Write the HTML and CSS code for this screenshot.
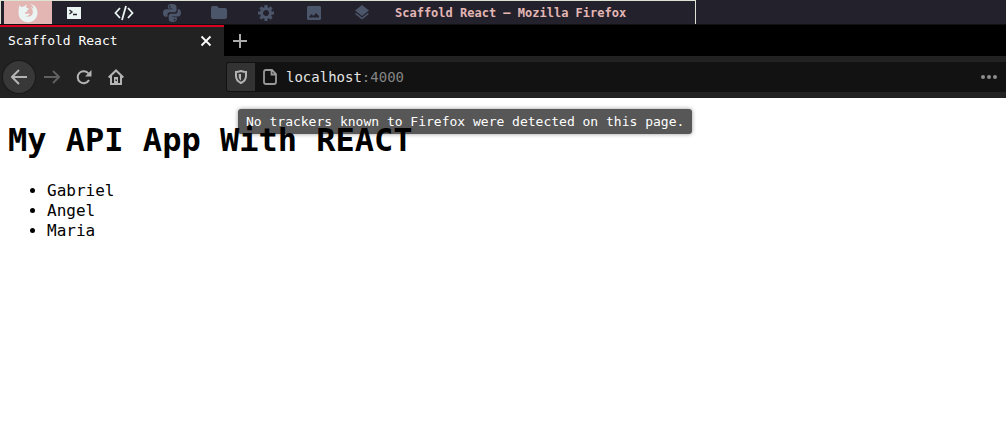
FILE: index.html
```html
<!DOCTYPE html>
<html lang="en">
<head>
<meta charset="utf-8">
<title>Scaffold React</title>
<link rel="stylesheet" href="styles.css">
</head>
<body>
<header class="panel">
  <div class="panel-group">
    <nav class="workspaces" aria-label="Workspaces">
      <button class="workspace current" aria-label="Browser"><svg width="20" height="20" viewBox="0 0 20 20"><path fill="currentColor" d="M1.200 2.200 3.300 4C4.300 3.300 5.500 3.300 6.300 3.500 7 2.300 8 1.700 9 1.500 8.200 2.700 8 3.800 8.600 5l2.400.4c-.2 1.200-1.200 1.500-2 2.200l.1 1.400-1.900-.1c-.8 1.100.5 2.300 1.900 1.900 1-.3 2-.6 2.500.1-.7 1.700-2.500 2.300-4 2 2.500 1.500 6.400.4 7.100-2.700.6-2.500-.4-4.300-2-5.900 1.400.4 2.200 1 2.900 1.800C15.500 3.500 14.300 2 12 .7c4 .6 7.300 3.900 7.500 8.500.2 5.900-4.200 10.100-9.600 10.100C4 19.300.5 14.700.5 9.800.5 7 1 5 1.200 2.200z"/></svg></button>
      <button class="workspace light" aria-label="Terminal"><svg width="14" height="12" viewBox="0 0 14 12"><path fill="currentColor" d="M0 0h14v12H0z"/><path d="m2.500 3 2.500 2-2.500 2M6 7.500h4" fill="none" stroke="#23212c" stroke-width="1.300"/></svg></button>
      <button class="workspace light" aria-label="Code"><svg width="20" height="16" viewBox="0 0 20 16" fill="none" stroke="currentColor" stroke-width="1.800"><path d="M6 3 1.500 8 6 13M14 3l4.500 5-4.500 5M12 1 8 15"/></svg></button>
      <button class="workspace" aria-label="Python"><svg width="18" height="18" viewBox="0 0 24 24" fill="currentColor"><path d="M12 0C7 0 6.500 2 6.500 3.500V6h6v1H4C1.500 7 0 9 0 12s1.500 5 3.500 5H6v-3c0-2 1.500-3 3-3h6c1.500 0 3-1 3-3V4c0-2.500-2-4-6-4zM9 2.200a1.200 1.200 0 1 1 0 2.400 1.200 1.200 0 0 1 0-2.400z"/><path d="M19.500 7v3c0 2-1.500 3-3 3h-6c-2 0-3 1.500-3 3v4c0 2.500 2 4 5 4 4 0 6-1.500 6-4v-2.500h-6v-1H20c2.500 0 4-2 4-5s-1.500-4.500-3-4.500zM15.500 19.500a1.200 1.200 0 1 1 0 2.400 1.200 1.200 0 0 1 0-2.400z"/></svg></button>
      <button class="workspace" aria-label="Files"><svg width="16" height="14" viewBox="0 0 16 14"><path fill="currentColor" d="M0 2q0-2 2-2h4l2 2h6q2 0 2 2v7q0 2-2 2H2q-2 0-2-2z"/></svg></button>
      <button class="workspace" aria-label="Settings"><svg width="16" height="16" viewBox="0 0 16 16" fill="none" stroke="currentColor"><circle cx="8" cy="8" r="4.500" stroke-width="3"/><path d="M8 0v3M8 13v3M0 8h3M13 8h3M2.400 2.400l2 2M11.600 11.600l2 2M2.400 13.600l2-2M11.600 4.400l2-2" stroke-width="3"/></svg></button>
      <button class="workspace" aria-label="Pictures"><svg width="14" height="14" viewBox="0 0 14 14"><path fill="currentColor" fill-rule="evenodd" d="M1 0h12l1 1v12l-1 1H1l-1-1V1zM2 11.500h10V10L9 7l-2.500 3-2-2L2 11z"/></svg></button>
      <button class="workspace" aria-label="Layers"><svg width="16" height="16" viewBox="0 0 16 16" fill="currentColor"><path d="m8 0 7 5.500L8 11 1 5.500z"/><path d="m1 9 7 5.500L15 9l-1.300-1L8 12.500 2.300 8z"/></svg></button>
    </nav>
    <span class="window-title">Scaffold React — Mozilla Firefox</span>
  </div>
</header>

<div class="tabs">
  <div class="tab">
    <span class="tab-title">Scaffold React</span>
    <button class="icon-button" aria-label="Close tab"><svg width="12" height="12" viewBox="0 0 12 12" fill="none" stroke="#fff" stroke-width="1.800"><path d="m1.500 1.500 9 9M10.500 1.500l-9 9"/></svg></button>
  </div>
  <button class="icon-button new-tab" aria-label="New tab"><svg width="14" height="14" viewBox="0 0 14 14" fill="none" stroke="#aaa" stroke-width="2"><path d="M7 0v14M0 7h14"/></svg></button>
</div>

<div class="toolbar">
  <div class="nav-buttons">
    <button class="icon-button back" aria-label="Back"><svg width="16" height="16" viewBox="0 0 16 16" fill="none" stroke="#b4b4b4" stroke-width="2"><path d="M16 8H1M8 1 1 8l7 7"/></svg></button>
    <button class="icon-button nav" aria-label="Forward" disabled><svg width="16" height="16" viewBox="0 0 16 16" fill="none" stroke="#5f5f5f" stroke-width="2"><path d="M0 8h15M9 2l6 6-6 6"/></svg></button>
    <button class="icon-button nav" aria-label="Reload"><svg width="16" height="16" viewBox="0 0 16 16" fill="none" stroke="#b4b4b4" stroke-width="2"><path d="M12.500 4.500A6 6 0 1 0 13 11"/><path d="M15.500 1v6.500H9z" fill="#b4b4b4" stroke="none"/></svg></button>
    <button class="icon-button nav" aria-label="Home"><svg width="16" height="16" viewBox="0 0 16 16" fill="none" stroke="#b4b4b4" stroke-width="2"><path d="m.7 8.500 7.300-7 7.300 7M3 7v8h10V7"/><path fill="#b4b4b4" stroke="none" fill-rule="evenodd" d="M6 8h4v7H6zM7.500 10.500v1.500H9v-1.500z"/></svg></button>
  </div>
  <div class="address">
    <button class="shield" aria-label="Tracking protection"><svg width="14" height="16" viewBox="0 0 14 16"><path d="M7 2q3 1 5 1v4c0 3.500-2 5.500-5 7-3-1.500-5-3.500-5-7V3q2 0 5-1z" fill="none" stroke="#b4b4b4" stroke-width="2"/><path d="M7 5v6.500C5.500 10.500 4.700 9 4.700 7V5z" fill="#b4b4b4"/></svg></button>
    <svg class="page-icon" width="14" height="16" viewBox="0 0 14 16" fill="none" stroke="#999" stroke-width="1.800"><path d="M3 1h6l4 4v8q0 2-2 2H3q-2 0-2-2V3q0-2 2-2zM8.500 1v4.500H13"/></svg>
    <span class="url">localhost<span class="port">:4000</span></span>
    <button class="icon-button more" aria-label="Page actions"><svg width="16" height="4" viewBox="0 0 16 4" fill="#8c8c8c"><circle cx="2" cy="2" r="2"/><circle cx="8" cy="2" r="2"/><circle cx="14" cy="2" r="2"/></svg></button>
    <div class="tooltip" role="tooltip">No trackers known to Firefox were detected on this page.</div>
  </div>
</div>

<main class="page">
  <h1 class="heading">My API App With REACT</h1>
  <ul class="people">
    <li>Gabriel</li>
    <li>Angel</li>
    <li>Maria</li>
  </ul>
</main>
</body>
</html>
```

FILE: styles.css
```css
* {
  box-sizing: border-box;
}

body {
  margin: 0;
  background: #fff;
  color: #000;
  font: 13px/16px "DejaVu Sans Mono", "Liberation Mono", monospace;
}

button {
  display: flex;
  align-items: center;
  justify-content: center;
  padding: 0;
  border: 0;
  background: none;
  font: inherit;
}

svg {
  display: block;
  flex: none;
}

.panel {
  display: flex;
  height: 25px;
  background: #23212c;
  border-bottom: 1px solid #111;
}

.panel-group {
  display: flex;
  align-items: center;
  padding: 0 69px 0 3px;
  border: solid #dce3d2;
  border-width: 1px 1px 0;
}

.workspaces {
  display: flex;
  height: 100%;
}

.workspace {
  width: 48px;
  color: #4c566a;
}

.workspace:nth-child(2) {
  width: 43px;
}

.workspace:nth-child(3) {
  width: 58px;
}

.workspace:nth-child(4) {
  width: 38px;
}

.workspace:nth-child(5) {
  width: 56px;
}

.workspace:nth-child(6) {
  width: 38px;
}

.workspace:nth-child(7) {
  width: 58px;
}

.workspace:nth-child(8) {
  width: 38px;
}

.workspace.current {
  background: #e3b6b4;
  color: #eaf4f2;
}

.workspace.light {
  color: #eaf4f2;
}

.window-title {
  padding-left: 14px;
  color: #e3b6b4;
  font-size: 12px;
  font-weight: bold;
  white-space: nowrap;
}

.tabs {
  display: flex;
  height: 31px;
  background: #000;
}

.tab {
  display: flex;
  align-items: center;
  justify-content: space-between;
  width: 224px;
  padding: 0 12px 2px 8px;
  border-top: 2px solid #d70022;
  background: #222;
  color: #fff;
}

.new-tab {
  width: 32px;
}

.toolbar {
  display: flex;
  align-items: center;
  gap: 95px;
  height: 42px;
  padding-left: 3px;
  background: #222;
}

.nav-buttons {
  display: flex;
  align-items: center;
}

.back {
  width: 32px;
  height: 32px;
  border-radius: 50%;
  background: #383838;
  box-shadow: 0 0 0 1px #191919;
}

.nav {
  width: 32px;
  height: 32px;
  padding-left: 2px;
}

.address {
  position: relative;
  display: flex;
  flex: 1;
  align-items: center;
  height: 30px;
  border-radius: 3px 0 0 3px;
  background: #121212;
}

.shield {
  width: 28px;
  height: 28px;
  margin-left: 1px;
  border-radius: 2px 0 0 2px;
  background: #333;
}

.page-icon {
  margin: 0 9px 0 8px;
}

.url {
  color: #e4e4e4;
  font-size: 14px;
}

.port {
  color: #858585;
}

.more {
  margin: 0 9px 0 auto;
}

.tooltip {
  position: absolute;
  top: 47px;
  left: 12px;
  padding: 5px 8px 4px;
  border-radius: 3px;
  background: rgba(0, 0, 0, 0.66);
  box-shadow: 0 0 4px rgba(0, 0, 0, 0.4);
  color: #fff;
  white-space: nowrap;
}

.page {
  padding: 22px 8px;
}

.heading {
  margin: 0;
  font-size: 32px;
  line-height: 40px;
}

.people {
  margin: 21px 0;
  padding-left: 39px;
  font-size: 16px;
  line-height: 20px;
}
```
